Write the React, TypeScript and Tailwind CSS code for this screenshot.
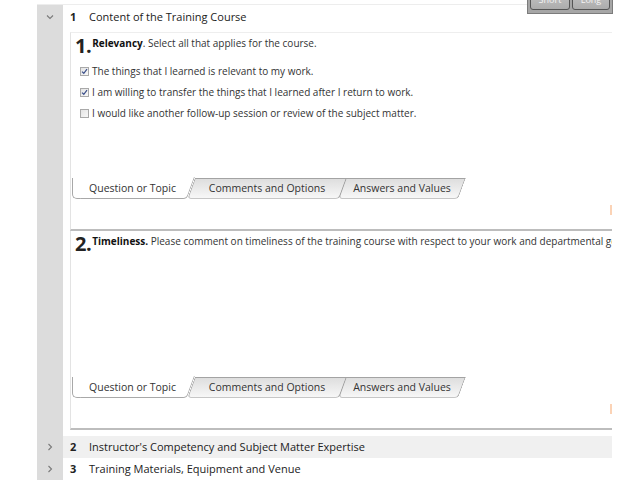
import React from 'react';

const FONT = "font-['Open_Sans','Noto_Sans',sans-serif]";

const ChevronDown = () => (
  <svg width="8" height="6" viewBox="0 0 8 6" className="block">
    <path d="M1 1.5 L4 4.5 L7 1.5" fill="none" stroke="#7a7a7a" strokeWidth="1.1" />
  </svg>
);

const ChevronRight = () => (
  <svg width="6" height="8" viewBox="0 0 6 8" className="block">
    <path d="M1.5 1 L4.5 4 L1.5 7" fill="none" stroke="#7a7a7a" strokeWidth="1.1" />
  </svg>
);

const CheckBox: React.FC<{ checked?: boolean }> = ({ checked }) => (
  <span className="w-[9px] h-[9px] border border-[#a9a9a9] bg-gradient-to-br from-[#e4e4e4] to-[#f8f8f8] flex items-center justify-center shrink-0">
    {checked && (
      <svg width="7" height="7" viewBox="0 0 7 7" className="block">
        <path d="M1 3.6 L2.8 5.3 L6 1.2" fill="none" stroke="#3b4f8a" strokeWidth="1.2" />
      </svg>
    )}
  </span>
);

const Tabs = () => (
  <div className="flex h-[21px] ml-[1px] text-[10.5px] text-[#333]">
    <div className="relative w-[119px] flex items-center justify-center">
      <div className="absolute left-0 top-0 bottom-0 w-[60px] bg-white border-l border-b border-[#a8a8a8] rounded-bl-[5px]" />
      <div className="absolute left-[12px] right-0 top-[-1px] bottom-0 -skew-x-[20deg] bg-white border-r border-b border-[#a8a8a8] rounded-br-[4px]" />
      <span className="relative pt-[1px] pl-[2px]">Question or Topic</span>
    </div>
    <div className="relative w-[152px] flex items-center justify-center">
      <div className="absolute inset-0 -skew-x-[20deg] bg-gradient-to-b from-[#dedede] to-[#f7f7f7] border border-[#a3a3a3] border-b-[#c6c6c6] rounded-b-[4px]" />
      <span className="relative pt-[1px]">Comments and Options</span>
    </div>
    <div className="relative w-[120px] -ml-px flex items-center justify-center">
      <div className="absolute inset-0 -skew-x-[20deg] bg-gradient-to-b from-[#dedede] to-[#f7f7f7] border border-[#a3a3a3] border-b-[#c6c6c6] rounded-b-[4px]" />
      <span className="relative pt-[1px]">Answers and Values</span>
    </div>
  </div>
);

const QuestionPanel: React.FC<{
  num: string;
  title: string;
  text: string;
  first?: boolean;
  children?: React.ReactNode;
}> = ({ num, title, text, first, children }) => (
  <div className={`border-l border-[#e3e3e3] border-b-2 border-b-[#bdbdbd] ${first ? 'border-t border-t-[#eeeeee]' : ''}`}>
    <div className={`${first ? 'h-[145px]' : 'h-[146px]'} pl-[4px] pt-[3px] overflow-hidden`}>
      <div className="flex items-start whitespace-nowrap">
        <span className="text-[20px] font-bold leading-none text-[#222] tracking-[-0.5px]">{num}.</span>
        <span className="text-[10px] text-[#333] leading-[14px] ml-[1px]">
          <b className="text-[#111]">{title}</b>
          {text}
        </span>
      </div>
      {children}
    </div>
    <Tabs />
    <div className="relative h-[30px]">
      <div className="absolute right-0 top-[6px] w-[2px] h-[10px] bg-[#fbd3b6]" />
    </div>
  </div>
);

const Section: React.FC<{
  num: string;
  title: string;
  open?: boolean;
  shaded?: boolean;
  children?: React.ReactNode;
}> = ({ num, title, open, shaded, children }) => (
  <div className="flex">
    <div className="w-[26px] shrink-0 bg-[#dcdcdc]">
      <div className={`${open ? 'h-[24px]' : 'h-[22px]'} flex items-center justify-center`}>
        {open ? <ChevronDown /> : <ChevronRight />}
      </div>
    </div>
    <div className="flex-1 min-w-0">
      <div
        className={`${open ? 'h-[24px]' : 'h-[22px]'} flex items-center pl-[7px] text-[11px] text-[#222] ${shaded ? 'bg-[#f0f0f0]' : 'bg-white'}`}
      >
        <span className="w-[19px] font-bold">{num}</span>
        <span>{title}</span>
      </div>
      {children}
    </div>
  </div>
);

export default function App() {
  return (
    <div className={`w-[640px] h-[480px] bg-white relative overflow-hidden ${FONT}`}>
      <div className="w-[575px] ml-[37px] mt-[4px] border-t border-[#ededed]">
        <Section num="1" title="Content of the Training Course" open>
          <div className="pl-[7px] pt-[3px] pb-[6px]">
            <QuestionPanel
              num="1"
              title="Relevancy"
              text=". Select all that applies for the course."
              first
            >
              <div className="mt-[5px] pl-[5px] text-[10px] text-[#333]">
                {[
                  { c: true, t: 'The things that I learned is relevant to my work.' },
                  { c: true, t: 'I am willing to transfer the things that I learned after I return to work.' },
                  { c: false, t: 'I would like another follow-up session or review of the subject matter.' },
                ].map((r) => (
                  <div key={r.t} className="h-[21px] flex items-center gap-[3px] whitespace-nowrap">
                    <CheckBox checked={r.c} />
                    <span>{r.t}</span>
                  </div>
                ))}
              </div>
            </QuestionPanel>
            <QuestionPanel
              num="2"
              title="Timeliness."
              text=" Please comment on timeliness of the training course with respect to your work and departmental goals."
            />
          </div>
        </Section>
        <Section num="2" title="Instructor's Competency and Subject Matter Expertise" shaded />
        <div className="border-b border-[#e6e6e6]">
          <Section num="3" title="Training Materials, Equipment and Venue" />
        </div>
        <div className="w-[26px] h-[10px] bg-[#dcdcdc]" />
      </div>

      <div className="absolute left-[527px] top-[-10px] w-[86px] h-[24px] bg-[#a6a6a6] border border-[#7c7c7c] flex gap-[2px] px-[2px]">
        <div className="w-[40px] h-[19px] rounded-b-[3px] border border-[#555] bg-gradient-to-b from-[#c4c4c4] to-[#acacac] flex items-end justify-center text-[9px] leading-[10px] text-[#f4f4f4] pb-[4px]">
          Short
        </div>
        <div className="w-[38px] h-[19px] rounded-b-[3px] border border-[#555] bg-gradient-to-b from-[#c4c4c4] to-[#acacac] flex items-end justify-center text-[9px] leading-[10px] text-[#f4f4f4] pb-[4px]">
          Long
        </div>
      </div>
    </div>
  );
}
